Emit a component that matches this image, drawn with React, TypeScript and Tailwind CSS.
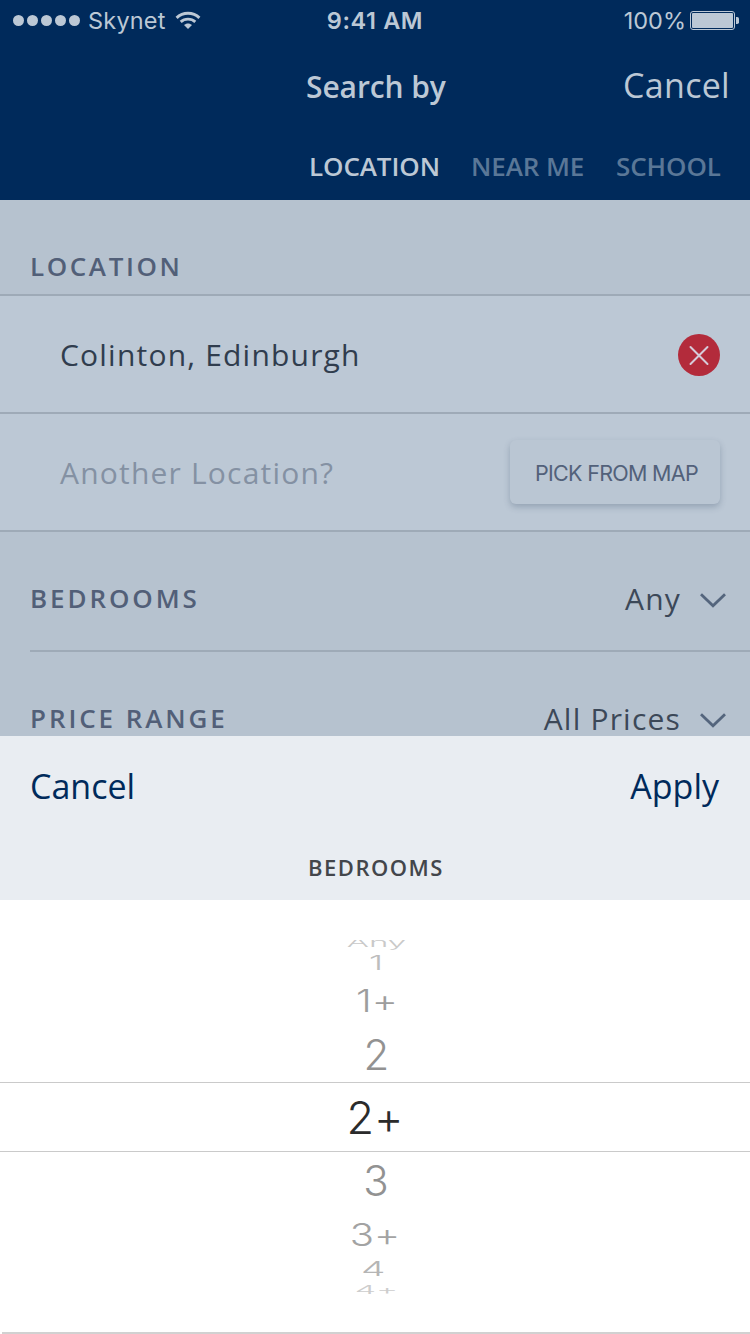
import type { ReactNode } from "react";

const tabs = [
  { label: "LOCATION", style: "ml-[309px] w-[162px] text-[#bcc8d5]" },
  { label: "NEAR ME", style: "w-[145px] text-[#5a7797]" },
  { label: "SCHOOL", style: "text-[#5a7797]" },
];

const options = [
  { label: "Any", row: "h-3 pb-2 pl-[3px] overflow-hidden", text: "text-[#c9c9c9] text-[33px] [transform:scaleY(0.36)]" },
  { label: "1", row: "h-[21px] pl-0.5", text: "text-[#bdbdbd] text-[36px] [transform:scaleY(0.55)]" },
  { label: "1+", row: "h-[54px] pl-1 pt-0.5", text: "text-[#9d9d9d] text-[40px] [transform:scaleY(0.77)]" },
  { label: "2", row: "h-[55px] pl-[3px]", text: "text-[#929292] text-[42px]" },
  { label: "2+", row: "h-[70px] border-y-[1.5px] border-[#cacaca]", text: "text-[#2b2b2b] text-[45px]" },
  { label: "3", row: "h-[58px] pl-0.5", text: "text-[#929292] text-[42px]" },
  { label: "3+", row: "h-[49px]", text: "text-[#a3a3a3] text-[40px] [transform:scaleY(0.78)]" },
  { label: "4", row: "h-5 pr-[3px]", text: "text-[#b5b5b5] text-[36px] [transform:scale(1.08,0.57)]" },
  { label: "4+", row: "h-[15px] pt-[7px] pl-[3px] overflow-hidden", text: "text-[#cdcdcd] text-[34px] [transform:scaleY(0.36)]" },
];

function Wifi() {
  return (
    <svg width="26" height="19" viewBox="0 0 26 19" className="ml-[9px]" fill="none">
      <path d="M1.6 6.8C8 .7 18 .7 24.4 6.8" stroke="#bcc8d5" strokeWidth="3" />
      <path d="M5.7 10.9C9.8 7.1 16.2 7.1 20.3 10.9" stroke="#bcc8d5" strokeWidth="2.8" />
      <path d="M9 14.1c2.2-2.1 5.8-2.1 8 0l-4 4Z" fill="#bcc8d5" />
    </svg>
  );
}

function Chevron() {
  return (
    <svg width="26" height="15" viewBox="0 0 26 15" className="mt-[3px] ml-[19px]" fill="none" stroke="#54657d" strokeWidth="2.8">
      <path d="M1 1.2 13 12.7 25 1.2" />
    </svg>
  );
}

function SectionLabel({ children, className }: { children: ReactNode; className: string }) {
  return <h2 className={`text-[26px] leading-9 font-semibold text-[#525f78] ${className}`}>{children}</h2>;
}

function SelectRow({ label, value, className }: { label: string; value: string; className: string }) {
  return (
    <div className={`ml-[30px] flex items-center pt-4 pr-6 ${className}`}>
      <SectionLabel className="mb-0.5 tracking-[2.9px]">{label}</SectionLabel>
      <span className="ml-auto text-[30px] leading-10 tracking-[1.2px] text-[#3c4858]">{value}</span>
      <Chevron />
    </div>
  );
}

export default function App() {
  return (
    <div className="flex h-[1334px] w-[750px] flex-col overflow-hidden bg-white font-['Open_Sans',sans-serif] whitespace-nowrap">
      <header className="h-[200px] shrink-0 bg-[#002a5b] text-[#bcc8d5]">
        <div className="grid h-10 grid-cols-3 items-center pr-[11px] pl-[13px] font-['Inter',sans-serif] text-[23.5px] leading-[38px]">
          <div className="flex items-center">
            <div className="flex gap-[3px]">
              {[0, 1, 2, 3, 4].map((n) => (
                <i key={n} className="size-[11px] rounded-full bg-[#bcc8d5]" />
              ))}
            </div>
            <span className="mt-0.5 ml-2 tracking-[0.2px]">Skynet</span>
            <Wifi />
          </div>
          <span className="mt-0.5 pr-0.5 text-center font-semibold tracking-[0.6px]">9:41 AM</span>
          <div className="flex items-center justify-end">
            <span className="mt-0.5">100%</span>
            <svg width="49" height="19" viewBox="0 0 49 19" className="ml-1" fill="#bcc8d5">
              <rect x=".5" y=".5" width="44" height="18" rx="2.5" fill="none" stroke="#bcc8d5" />
              <rect x="2" y="2" width="41" height="15" rx="1" />
              <path d="M46 6h1.2q1.8 0 1.8 1.8v3.4q0 1.8-1.8 1.8H46Z" />
            </svg>
          </div>
        </div>
        <div className="flex h-[92px] items-center">
          <h1 className="ml-[306px] text-[30px] font-semibold tracking-[-0.1px]">Search by</h1>
          <button className="mr-[20px] mb-0.5 ml-auto text-[34px] tracking-[0.3px]">Cancel</button>
        </div>
        <nav className="flex h-[68px] items-center text-[26px] font-semibold tracking-[-0.1px]">
          {tabs.map((t) => (
            <span key={t.label} className={t.style}>{t.label}</span>
          ))}
        </nav>
      </header>

      <main className="h-[536px] shrink-0 overflow-hidden bg-[#b6c2cf]">
        <div className="flex h-24 items-end border-b-2 border-[#9eaab7] pb-2.5 pl-[30px]">
          <SectionLabel className="tracking-[2.6px]">LOCATION</SectionLabel>
        </div>
        <div className="flex h-[118px] items-center justify-between border-b-2 border-[#9eaab7] bg-[#bcc8d5] pr-[30px] pl-[60px]">
          <span className="text-[30px] tracking-[1.2px] text-[#303d4e]">Colinton, Edinburgh</span>
          <svg width="42" height="42" viewBox="0 0 42 42" className="mt-0.5">
            <circle cx="21" cy="21" r="21" fill="#b32b3b" />
            <path d="m12.5 13 17 17m0-17-17 17" stroke="#d6cbd9" strokeWidth="2" strokeLinecap="round" />
          </svg>
        </div>
        <div className="flex h-[118px] items-center justify-between border-b-2 border-[#9eaab7] bg-[#bcc8d5] pr-[30px] pl-[60px]">
          <span className="text-[30px] tracking-[1.2px] text-[#8491a3]">Another Location?</span>
          <button className="mb-px h-16 w-[210px] rounded-md bg-[#bac6d3] pt-1 pl-[3px] font-['Inter',sans-serif] text-[21.5px] tracking-[-0.7px] text-[#52617a] shadow-[0_3px_6px_rgba(60,80,105,0.3)]">
            PICK FROM MAP
          </button>
        </div>
        <SelectRow label="BEDROOMS" value="Any" className="h-[120px] border-b-2 border-[#9eaab7]" />
        <SelectRow label="PRICE RANGE" value="All Prices" className="h-[118px]" />
      </main>

      <section className="h-[164px] shrink-0 bg-[#e9edf2]">
        <div className="flex h-[98px] items-center justify-between pt-0.5 pr-[31px] pl-[30px] text-[34px] text-[#002a5b]">
          <button>Cancel</button>
          <button>Apply</button>
        </div>
        <h3 className="pl-0.5 text-center text-[22px] leading-[66px] font-semibold tracking-[1.5px] text-[#43464b]">BEDROOMS</h3>
      </section>

      <div className="flex flex-1 flex-col bg-white pt-10 font-['Inter',sans-serif] font-light [font-feature-settings:'calt'_0]">
        {options.map((o) => (
          <div key={o.label} className={`flex shrink-0 items-center justify-center ${o.row}`}>
            <span className={`block leading-none ${o.text}`}>{o.label}</span>
          </div>
        ))}
        <div className="mt-auto ml-0.5 h-0.5 shrink-0 bg-[#d1d1d1]" />
      </div>
    </div>
  );
}
